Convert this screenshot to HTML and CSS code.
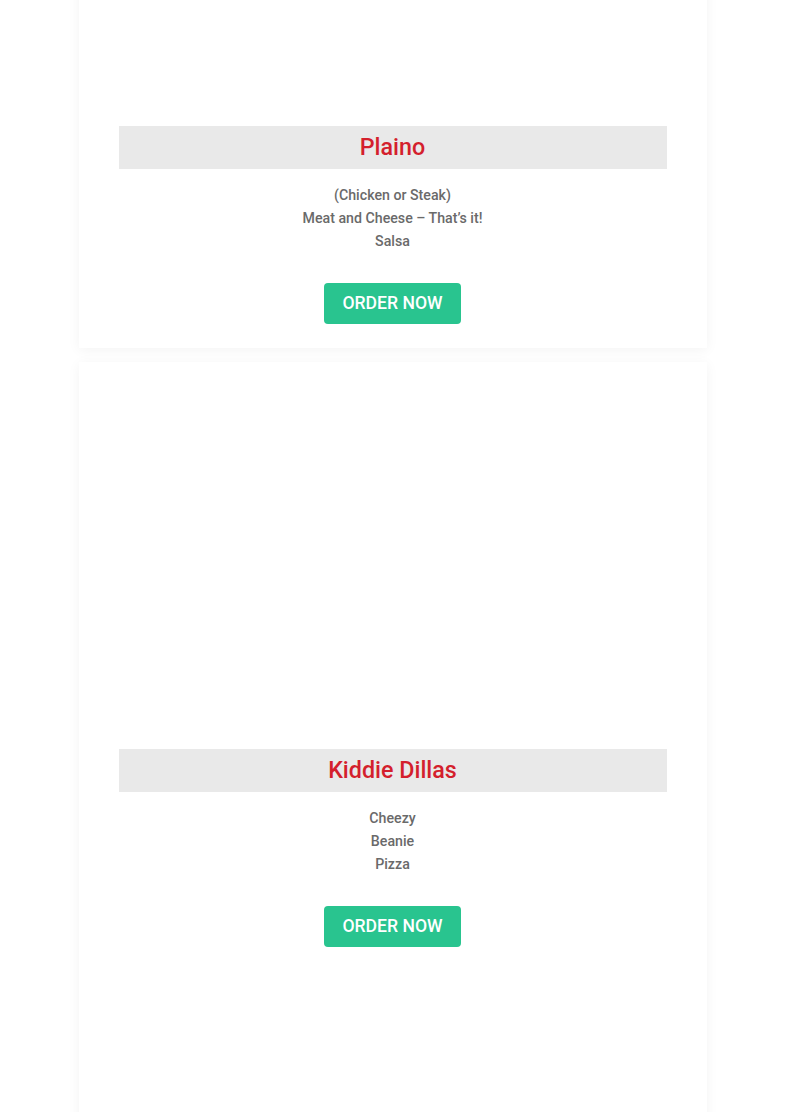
FILE: index.html
```html
<!DOCTYPE html>
<html lang="en">
<head>
  <meta charset="UTF-8" />
  <meta name="viewport" content="width=device-width, initial-scale=1.0" />
  <title>Menu | Quesadillas</title>
  <link rel="stylesheet" href="styles.css">
</head>
<body>

  <div class="menu-list">

    <div class="menu-card first">
      <div class="menu-media"></div>
      <h2 class="menu-title">Plaino</h2>
      <ul class="menu-items">
        <li>(Chicken or Steak)</li>
        <li>Meat and Cheese – That’s it!</li>
        <li>Salsa</li>
      </ul>
      <a href="#" class="btn-order">ORDER NOW</a>
    </div>

    <div class="menu-card tall">
      <div class="menu-media"></div>
      <h2 class="menu-title">Kiddie Dillas</h2>
      <ul class="menu-items">
        <li>Cheezy</li>
        <li>Beanie</li>
        <li>Pizza</li>
      </ul>
      <a href="#" class="btn-order">ORDER NOW</a>
    </div>

  </div>

</body>
</html>
```

FILE: styles.css
```css
* {
  box-sizing: border-box;
}

body {
  font-family: Roboto, 'Liberation Sans', sans-serif;
  margin: 0;
  background: #fff;
  color: #666;
  overflow: hidden;
}

.menu-list {
  width: 628px;
  margin: 0 auto;
  display: flex;
  flex-direction: column;
  gap: 14px;
}

.menu-card {
  background: #fff;
  padding: 40px 40px 24px;
  box-shadow: 0 2px 12px rgba(0, 0, 0, 0.05);
  display: flex;
  flex-direction: column;
  align-items: center;
  text-align: center;
}

.menu-card.first {
  margin-top: -261px;
}

.menu-card.tall {
  padding-bottom: 200px;
}

.menu-media {
  width: 100%;
  height: 347px;
}

.menu-title {
  width: 100%;
  margin: 0;
  height: 43px;
  line-height: 43px;
  background: #e9e9e9;
  color: #d41f2d;
  font-size: 23.3px;
  font-weight: 500;
}

.menu-items {
  list-style: none;
  margin: 15px 0 0;
  padding: 0;
  font-size: 14.2px;
  line-height: 23px;
  font-weight: 500;
  color: #6a6a6a;
}

.btn-order {
  margin-top: 30px;
  display: block;
  height: 41px;
  line-height: 41px;
  padding: 0 18px;
  background: #29c48f;
  color: #fff;
  font-size: 17.6px;
  font-weight: 500;
  text-decoration: none;
  border-radius: 4px;
}
```
